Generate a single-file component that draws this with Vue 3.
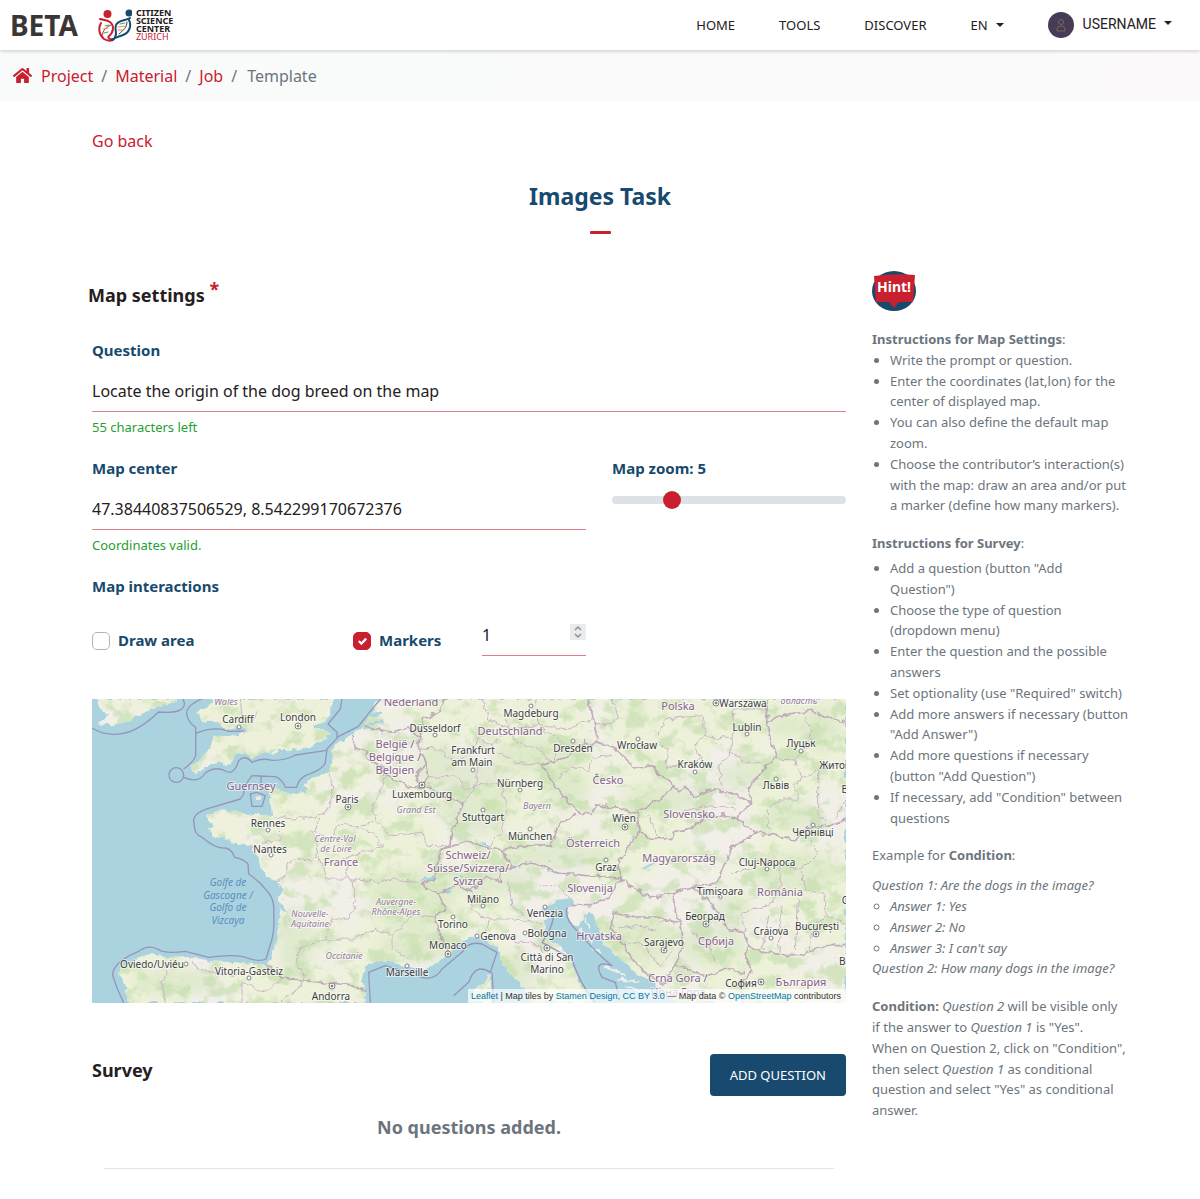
<script setup>
import { ref, computed } from 'vue'

const question = ref('Locate the origin of the dog breed on the map')
const center = ref('47.38440837506529, 8.542299170672376')
const zoom = ref(5)
const drawArea = ref(false)
const markers = ref(true)
const markerCount = ref(1)
const charactersLeft = computed(() => 100 - question.value.length)

const links = ['HOME', 'TOOLS', 'DISCOVER']
const crumbs = ['Project', 'Material', 'Job']

const mapHints = [
  'Write the prompt or question.',
  'Enter the coordinates (lat,lon) for the center of displayed map.',
  'You can also define the default map zoom.',
  'Choose the contributor’s interaction(s) with the map: draw an area and/or put a marker (define how many markers).'
]
const surveyHints = [
  'Add a question (button "Add Question")',
  'Choose the type of question (dropdown menu)',
  'Enter the question and the possible answers',
  'Set optionality (use "Required" switch)',
  'Add more answers if necessary (button "Add Answer")',
  'Add more questions if necessary (button "Add Question")',
  'If necessary, add "Condition" between questions'
]
const answers = ['Answer 1: Yes', 'Answer 2: No', "Answer 3: I can't say"]

// Land masses, drawn on a grid three times finer than the map.
const land = [
  'M864 0L840 40L819 77L790 100L759 120L725 137L722 182L715 217L660 237L635 262L650 277L600 287L565 277L550 265L520 267L535 297L540 342L525 350L500 342L480 352L450 342L430 332L390 334L350 350L346 372L375 378L350 392L370 417L410 422L440 437L480 437L490 460L500 477L507 507L530 535L555 547L572 577L557 607L575 620L592 655L566 622L560 665L556 700L550 737L540 777L520 797L480 795L420 790L350 787L290 775L230 777L180 765L150 772L110 797L80 817L95 847L105 887L110 912L814 912L819 877L809 837L819 807L859 782L899 787L939 802L994 812L1029 797L1064 767L1099 737L1129 715L1159 709L1189 732L1219 747L1234 787L1249 817L1279 847L1299 877L1319 912L1499 912L1474 867L1449 817L1439 777L1399 737L1364 717L1359 677L1369 647L1349 632L1399 602L1439 597L1449 612L1429 627L1424 647L1439 677L1460 682L1475 655L1490 632L1515 672L1539 737L1593 787L1633 822L1693 857L1733 887L1753 912L2262 912L2262 0Z',
  'M355 -3L365 9L345 27L315 39L330 57L335 67L375 69L400 92L440 82L470 87L455 97L440 109L400 112L365 109L355 147L320 187L290 207L320 222L350 202L390 187L405 202L420 187L425 167L465 162L480 177L520 157L550 152L610 152L660 142L700 122L715 97L690 92L660 82L700 67L715 42L710 27L722 7L722 -3Z',
  'M15 -3L20 22L45 47L20 72L60 82L90 72L130 57L180 27L250 9L255 -3Z',
  'M1135 912L1149 867L1185 847L1192 822L1198 870L1196 912Z',
  'M490 294L508 292L505 300L494 300Z',
  'M540 162L552 154L560 162L548 168Z'
].join('')

const seaLines = [
  'M0 87Q40 112 90 104T200 39Q280 45 277 12L272 -3',
  'M335 -3Q280 20 284 45Q288 70 311 85V170Q305 190 275 210',
  'M275 235Q320 255 340 222Q370 200 400 216Q425 232 440 185Q460 165 480 190Q510 175 540 184Q580 185 610 168L700 155L740 112L799 82L839 32L868 -3',
  'M311 103Q370 80 410 97L455 96',
  'M750 0L745 30L708 75L735 100V118',
  'M705 152L700 190Q695 210 640 230Q620 240 614 265H580Q570 240 550 233L480 230Q455 260 455 285L445 300L350 328Q295 345 307 375Q305 405 330 415Q370 450 400 447Q420 450 428 475Q455 480 468 495L470 525Q500 545 520 570Q550 600 545 640Q548 690 540 720L522 780Q500 790 460 775Q430 765 350 775L280 757Q220 765 200 752Q170 735 140 757Q60 790 62 830Q75 870 95 912',
  'M507 230V275M475 285L480 322H510L520 290L495 280Z',
  'M835 912L830 820L880 800Q930 815 990 835Q1030 845 1050 810L1110 760Q1130 725 1170 735L1215 760L1195 820Q1150 790 1130 850L1085 890',
  'M1200 820L1205 912',
  'M1385 650Q1380 690 1350 730L1440 780Q1460 850 1510 912',
  'M1425 625Q1415 660 1460 700Q1510 760 1560 800Q1500 780 1530 835L1570 850L1580 890'
].join('')

const borders = [
  'M819 82L889 102L949 87L984 117L979 147L999 187L974 232L984 262L1009 237L999 187',
  'M779 107L789 147L824 157L829 182L869 202L884 232L959 267L1009 262L1079 302L1114 315L1079 397L1074 437L1044 452',
  'M1059 -3L1044 37L994 57L984 117',
  'M1489 -3L1504 57L1514 117L1499 147L1479 127L1419 177L1349 197L1379 247L1409 287L1459 337L1499 349L1509 317L1569 327L1629 342L1659 327L1709 297L1744 262',
  'M1509 127L1569 147L1599 177L1629 207L1679 197L1699 222L1744 257L1759 277L1779 262L1809 292L1859 272L1919 282L1979 312L1969 267L2009 217L2054 177L2029 97L2024 -3',
  'M1639 342L1644 397L1674 417L1739 422L1749 397L1799 387L1839 357L1899 347L1939 362L1944 342L1979 312',
  'M1939 362L1989 402L2049 407L2109 427L2139 387L2199 382L2262 362',
  'M1989 402L1939 437L1918 447L1883 537L1873 552L1803 562L1743 582L1678 597L1623 567L1588 537L1578 497L1603 447L1644 397',
  'M1044 452L1129 427L1189 447L1229 452L1329 437L1379 442L1399 377L1449 347',
  'M1044 452L1029 537L989 557L1040 585L1099 557L1139 577L1179 537L1229 547L1219 507L1259 507L1229 452',
  'M1040 585L1059 627L1029 657L1049 717L1069 757',
  'M1259 507L1319 492L1399 522L1509 532L1588 537M1439 617L1499 617L1549 597L1588 537',
  'M1563 642L1558 687L1613 767L1663 827L1718 857L1748 797L1773 747L1763 672L1713 657L1633 657ZM1743 582L1748 637L1763 672',
  'M1803 562L1853 607L1893 657L1903 687L1953 697L1968 737L1983 752L2063 767L2133 767L2203 737L2262 737',
  'M1968 737L1958 777L1983 812L1943 857L1953 912M1748 797L1803 817L1843 832L1903 807L1953 822',
  'M2029 72L2069 47L2159 37L2262 72',
  'M520 797L570 837L660 847L700 852L780 857L819 877'
].join('')

const regions = [
  'M540 350L600 360L660 355L700 340L722 300L715 217M680 360L670 400L720 420L740 375L790 382',
  'M560 380L565 420L510 432M590 490L580 530L550 547M590 490L630 475L660 485L680 460L665 400',
  'M680 470L700 540L780 540L790 610L770 660L720 660L700 720L620 750L615 800L640 830M700 720L780 720L850 690L900 710L960 650L1029 657',
  'M790 382L850 370L839 320L870 270L880 232M790 382L840 400L870 440L760 480L770 540M850 370L900 410L990 400L1000 440L1060 440',
  'M770 540L860 550L900 540L980 550M900 710L900 750L950 780M979 147L1040 150L1090 190L1130 170L1160 120L1200 140L1260 90L1190 60L1170 0',
  'M1009 237L1090 230L1120 270L1190 250L1230 260L1245 330L1230 400L1189 447M1114 315L1150 270L1160 190M1220 160L1270 190L1349 197',
  'M1240 60L1270 130L1340 150L1380 190L1410 130L1340 80L1330 0M1260 90L1340 80L1430 90L1500 60',
  'M1399 240L1440 200L1490 215L1500 175L1560 170M1560 -3L1580 60L1540 80L1509 80M1700 110L1720 60L1830 50L1840 110L1920 120L1925 30L2020 30',
  'M1690 130L1730 150L1720 210L1830 180L1800 140L1840 110M1920 120L1915 170L1880 200L1890 270M1915 160L1960 190L2010 195',
  'M1770 340L1850 320L1930 330M1670 350L1700 420M2054 177L2110 180L2160 130L2140 50M2110 180L2130 240L2100 260L2120 300L2070 300L2025 330L2030 390',
  'M2180 210L2180 350L2200 370M2130 240L2180 210L2262 190M2262 300L2230 360',
  'M1918 520L1980 510L2000 480L2060 500L2070 560L2030 620L1950 640L1960 700M2060 500L2130 510L2180 460L2150 420M2130 510L2140 570L2200 590L2200 650L2262 670M2070 620L2060 770M2030 650L2010 750M2120 600L2110 750M2200 650L2160 690L2150 760',
  'M1140 577L1140 630L1190 660L1270 660L1359 677M1190 660L1180 700M1250 547L1260 620L1300 650M1340 560L1400 560L1430 597M1360 760L1340 740L1250 720',
  'M1580 687L1630 680L1690 690L1720 657M1600 730L1660 740L1700 800L1740 760M1800 700L1850 730L1870 790',
  'M215 790L230 820L210 850L220 912M300 790L320 810L430 830L450 800M450 912L450 850L520 880L570 837M560 912L620 870L640 830',
  'M445 0L450 50L480 70L500 30'
].join('')

const lakes = [
  [1010, 540, 40, 8, -15], [1183, 437, 28, 6, 30], [1670, 500, 50, 5, -28], [1258, 610, 5, 28, 8],
  [1105, 530, 14, 6, 40], [1070, 577, 26, 5, -20], [1620, 415, 5, 14, 30], [1265, 502, 12, 5, 0], [1370, 484, 14, 5, 0]
]

const woods = [
  [2185, 90, 55, 70], [2080, 80, 50, 30], [1960, 230, 90, 40], [1720, 300, 130, 40], [2100, 350, 90, 40],
  [2110, 520, 130, 60], [1920, 640, 50, 60], [610, 730, 50, 110], [960, 600, 130, 90], [1180, 545, 150, 40],
  [1400, 470, 170, 40], [1150, 300, 110, 110], [1340, 170, 140, 50], [1640, 720, 120, 70], [1430, 270, 60, 60],
  [1060, 200, 90, 60], [1270, 820, 60, 60], [1860, 740, 100, 60], [250, 850, 120, 40], [980, 740, 120, 50]
]

// Label: text, centre x, baseline y, kind
const labels = [
  ['Wales', 134, 6, 'region'], ['Cardiff', 146, 24, 'city'], ['London', 206, 22, 'city'],
  ['Guernsey', 159, 91, 'state'], ['Rennes', 176, 128, 'city'], ['Nantes', 178, 154, 'city'], ['Paris', 255, 104, 'city'],
  ['Centre-Val', 243, 143, 'region'], ['de Loire', 244, 153, 'region'], ['France', 249, 167, 'country'],
  ['Golfe de', 136, 187, 'sea'], ['Gascogne /', 136, 200, 'sea'], ['Golfo de', 136, 212, 'sea'], ['Vizcaya', 136, 225, 'sea'],
  ['Nouvelle-', 218, 218, 'region'], ['Aquitaine', 218, 228, 'region'], ['Occitanie', 252, 260, 'region'],
  ['Oviedo/Uviéu', 60, 269, 'city'], ['Vitoria-Gasteiz', 157, 276, 'city'], ['Andorra', 239, 301, 'city'],
  ['Nederland', 319, 7, 'country'], ['Düsseldorf', 343, 33, 'city'], ['België /', 303, 49, 'country'],
  ['Belgique /', 303, 62, 'country'], ['Belgien', 303, 75, 'country'], ['Luxembourg', 330, 99, 'city'],
  ['Grand Est', 324, 114, 'region'], ['Magdeburg', 439, 18, 'city'], ['Deutschland', 418, 36, 'country'],
  ['Frankfurt', 381, 55, 'city'], ['am Main', 380, 67, 'city'], ['Dresden', 481, 53, 'city'], ['Nürnberg', 428, 88, 'city'],
  ['Bayern', 445, 110, 'region'], ['Stuttgart', 391, 122, 'city'], ['München', 438, 141, 'city'],
  ['Schweiz/', 376, 160, 'country'], ['Suisse/Svizzera/', 376, 173, 'country'], ['Svizra', 376, 186, 'country'],
  ['Auvergne-', 304, 206, 'region'], ['Rhône-Alpes', 304, 216, 'region'], ['Milano', 391, 204, 'city'],
  ['Torino', 361, 229, 'city'], ['Genova', 406, 241, 'city'], ['Monaco', 356, 250, 'city'], ['Marseille', 315, 277, 'city'],
  ['Venezia', 453, 218, 'city'], ['Bologna', 455, 238, 'city'], ['Città di San', 455, 262, 'city'], ['Marino', 455, 274, 'city'],
  ['Polska', 586, 11, 'country'], ['Warszawa', 651, 8, 'city'], ['область', 707, 5, 'region'], ['Lublin', 655, 32, 'city'],
  ['Wrocław', 545, 50, 'city'], ['Луцьк', 709, 48, 'city'], ['Kraków', 603, 69, 'city'], ['Житомир', 750, 70, 'city'],
  ['Česko', 516, 85, 'country'], ['Львів', 684, 90, 'city'], ['Slovensko', 597, 119, 'country'], ['Wien', 532, 123, 'city'],
  ['Österreich', 501, 148, 'country'], ['Чернівці', 721, 137, 'city'], ['Magyarország', 587, 163, 'country'],
  ['Graz', 514, 172, 'city'], ['Cluj-Napoca', 675, 167, 'city'], ['Slovenija', 498, 193, 'country'],
  ['Timișoara', 628, 196, 'city'], ['România', 688, 197, 'country'], ['Београд', 613, 221, 'city'],
  ['Hrvatska', 507, 241, 'country'], ['Craiova', 679, 236, 'city'], ['București', 725, 231, 'city'],
  ['Sarajevo', 572, 247, 'city'], ['Србија', 624, 246, 'country'], ['Crna Gora /', 586, 283, 'country'],
  ['Црна Гора', 586, 297, 'country'], ['София', 649, 288, 'city'], ['България', 709, 287, 'country'],
  ['Варна', 762, 266, 'city'], ['Chișinău', 770, 205, 'city'], ['Bălți', 760, 94, 'city']
]
const capitals = [[206, 27], [256, 108], [330, 86], [533, 128], [624, 4], [614, 225], [572, 251], [724, 235], [356, 255], [455, 249], [240, 287], [669, 283]]
const towns = [[147, 28], [176, 131], [179, 156], [94, 265], [157, 279], [343, 36], [439, 7], [381, 71], [481, 42], [428, 91], [391, 111], [438, 130], [391, 207], [361, 218], [385, 237], [315, 267], [453, 208], [433, 234], [655, 35], [546, 40], [709, 52], [603, 73], [684, 80], [721, 126], [514, 161], [675, 170], [628, 198], [679, 239]]
</script>

<template>
  <div class="page">
    <header class="topbar">
      <a class="brand" href="#">
        <span class="beta">BETA</span>
        <svg class="logo" viewBox="0 0 34 34" width="34" height="34" aria-hidden="true">
          <circle cx="9.500" cy="6" r="4" fill="#c8202f" />
          <circle cx="31" cy="5" r="3.500" fill="#174a6e" />
          <g fill="none" stroke-linecap="round">
            <path d="M2 11C5 12 9 12 12 14C17 18 15 25 11 28C9 30 12 32 16 31" stroke="#c8202f" stroke-width="2" />
            <path d="M3 15C0 20 1 27 6 31C9 33 12 33 15 32" stroke="#c8202f" stroke-width="2" />
            <path d="M4 28C5 22 8 19 13 17" stroke="#c8202f" stroke-width="1" />
            <path d="M32 10C27 13 20 12 18 17C16 22 20 25 17 29" stroke="#174a6e" stroke-width="2" />
            <path d="M31 12C34 18 31 25 25 27C20 29 17 29 14 32" stroke="#174a6e" stroke-width="2" />
            <path d="M29 14C29 20 25 22 21 26" stroke="#174a6e" stroke-width="1" />
            <path d="M7 18L11 17M6 25L10 24M22 16L27 15" stroke="#4aa564" stroke-width="1" />
            <path d="M5 21L10 20M20 22L26 22M20 19L28 18" stroke="#e58a5a" stroke-width="1" />
          </g>
        </svg>
        <span class="wordmark">
          <span>CITIZEN</span><span>SCIENCE</span><span>CENTER</span><span class="zurich">ZURICH</span>
        </span>
      </a>
      <nav class="menu">
        <a v-for="link in links" :key="link" href="#">{{ link }}</a>
        <button type="button" class="drop">EN<span class="caret"></span></button>
        <button type="button" class="drop user">
          <svg class="avatar" viewBox="0 0 26 26" width="26" height="26" aria-hidden="true">
            <circle cx="13" cy="13" r="13" fill="#463c57" />
            <g fill="none" stroke="#6f6868">
              <circle cx="13" cy="10" r="2.500" />
              <path d="M9 19V17Q9 14 13 14T17 17V19Z" fill="#50393f" />
            </g>
          </svg>
          <span class="username">USERNAME<span class="caret"></span></span>
        </button>
      </nav>
    </header>

    <nav class="crumbs" aria-label="Breadcrumb">
      <a href="#" aria-label="Home">
        <svg class="house" viewBox="0 0 576 512" width="19" height="17" aria-hidden="true">
          <path fill="#c8202f" d="M280 148L96 300V464a16 16 0 0 0 16 16l112 0a16 16 0 0 0 16-16V368a16 16 0 0 1 16-16h64a16 16 0 0 1 16 16v96a16 16 0 0 0 16 16h112a16 16 0 0 0 16-16V300L296 148a12 12 0 0 0-16 0zM572 251L488 182V44a12 12 0 0 0-12-12h-56a12 12 0 0 0-12 12v72L318 43a48 48 0 0 0-61 0L4 251a12 12 0 0 0-2 17l26 31a12 12 0 0 0 17 2L280 107a12 12 0 0 1 16 0l235 194a12 12 0 0 0 17-2l26-31a12 12 0 0 0-2-17z" />
        </svg>
      </a>
      <ol>
        <li v-for="crumb in crumbs" :key="crumb"><a href="#">{{ crumb }}</a></li>
        <li aria-current="page">Template</li>
      </ol>
    </nav>

    <main class="container">
      <a class="back" href="#">Go back</a>
      <h1>Images Task</h1>

      <div class="columns">
        <section class="form">
          <h2 class="settings">Map settings <span class="required">*</span></h2>

          <div class="field">
            <label for="question">Question</label>
            <input id="question" v-model="question" type="text" />
            <p class="valid">{{ charactersLeft }} characters left</p>
          </div>

          <div class="split">
            <div class="field">
              <label for="center">Map center</label>
              <input id="center" v-model="center" type="text" />
              <p class="valid">Coordinates valid.</p>
            </div>
            <div class="field">
              <label for="zoom">Map zoom: {{ zoom }}</label>
              <input id="zoom" v-model="zoom" type="range" min="1" max="18" />
            </div>
          </div>

          <fieldset class="interactions">
            <legend>Map interactions</legend>
            <div class="options">
              <label class="check"><input v-model="drawArea" type="checkbox" />Draw area</label>
              <label class="check"><input v-model="markers" type="checkbox" />Markers</label>
              <input v-model="markerCount" type="number" min="1" aria-label="Number of markers" />
            </div>
          </fieldset>

          <div class="map">
            <svg viewBox="0 0 754 304" preserveAspectRatio="xMidYMid slice" role="img" aria-label="Map of Europe">
              <defs>
                <clipPath id="land"><path :d="land" transform="scale(.33333)" /></clipPath>
                <filter id="rough" x="0" y="0" width="1" height="1" color-interpolation-filters="sRGB">
                  <feTurbulence type="fractalNoise" baseFrequency=".14" numOctaves="2" seed="4" />
                  <feDisplacementMap in="SourceGraphic" scale="7" xChannelSelector="R" yChannelSelector="G" />
                </filter>
                <filter id="speckle" x="0" y="0" width="1" height="1" color-interpolation-filters="sRGB">
                  <feTurbulence type="fractalNoise" baseFrequency=".045 .06" numOctaves="5" seed="12" />
                  <feColorMatrix values="0 0 0 0 .77  0 0 0 0 .87  0 0 0 0 .68  0 6 0 0 -3" />
                </filter>
                <filter id="fields" x="0" y="0" width="1" height="1" color-interpolation-filters="sRGB">
                  <feTurbulence type="fractalNoise" baseFrequency=".012" numOctaves="3" seed="7" />
                  <feColorMatrix values="0 0 0 0 .93  0 0 0 0 .945  0 0 0 0 .85  0 5 0 0 -1.800" />
                </filter>
                <filter id="soft"><feGaussianBlur stdDeviation="14" /></filter>
              </defs>
              <rect width="754" height="304" fill="#aad3df" />
              <g filter="url(#rough)">
                <g clip-path="url(#land)">
                  <rect width="754" height="304" fill="#f2efe9" />
                  <rect width="754" height="304" filter="url(#fields)" />
                  <g transform="scale(.33333)" filter="url(#soft)" fill="#cfe3b9" opacity=".45">
                    <ellipse v-for="(w, i) in woods" :key="i" :cx="w[0]" :cy="w[1]" :rx="w[2]" :ry="w[3]" />
                  </g>
                  <rect width="754" height="304" filter="url(#speckle)" opacity=".65" />
                </g>
                <g transform="scale(.33333)" fill="none" stroke-linejoin="round">
                  <path d="M835 50L870 40M830 75L875 65M815 90L870 93" stroke="#aad3df" stroke-width="7" />
                  <path d="M1480 660L1492 690M1465 690L1500 730M1500 745L1530 765M1530 800L1600 830M1580 840L1640 850M1600 865L1680 880" stroke="#f2efe9" stroke-width="6" />
                  <ellipse v-for="(l, i) in lakes" :key="i" :cx="l[0]" :cy="l[1]" :rx="l[2] / 2" :ry="l[3] / 2" :transform="`rotate(${l[4]} ${l[0]} ${l[1]})`" fill="#9fd0e6" />
                  <path :d="regions" stroke="#c9b5c6" stroke-width="3" />
                  <path :d="borders" stroke="#b79fb5" stroke-width="5" opacity=".85" />
                </g>
              </g>
              <g transform="scale(.33333)" fill="none" stroke="#9695b8" stroke-width="4" stroke-linejoin="round">
                <path :d="seaLines" />
                <circle cx="253" cy="228" r="22" />
              </g>
              <g class="dots">
                <circle v-for="(t, i) in towns" :key="i" :cx="t[0]" :cy="t[1]" r="2" />
                <g v-for="(c, i) in capitals" :key="'c' + i">
                  <circle :cx="c[0]" :cy="c[1]" r="3" /><circle class="core" :cx="c[0]" :cy="c[1]" r="1" />
                </g>
              </g>
              <text v-for="l in labels" :key="l[0]" :x="l[1]" :y="l[2]" :class="l[3]">{{ l[0] }}</text>
            </svg>
            <p class="attribution">
              <a href="#">Leaflet</a> | Map tiles by <a href="#">Stamen Design, CC BY 3.0</a> — Map data © <a href="#">OpenStreetMap</a> contributors
            </p>
          </div>

          <div class="survey">
            <h2>Survey</h2>
            <button type="button" class="add">ADD QUESTION</button>
          </div>
          <p class="empty">No questions added.</p>
          <hr />
        </section>

        <aside class="hints">
          <svg class="hint" viewBox="0 0 44 42" width="44" height="42" role="img" aria-label="Hint!">
            <ellipse cx="22" cy="21" rx="22" ry="20" fill="#174a6e" />
            <path d="M2 6Q22 3 43 5L41 32H27L22 38L17 32H4Z" fill="#c8202f" />
            <text x="22" y="22">Hint!</text>
          </svg>
          <p><strong>Instructions for Map Settings</strong>:</p>
          <ul>
            <li v-for="hint in mapHints" :key="hint">{{ hint }}</li>
          </ul>
          <p class="section"><strong>Instructions for Survey</strong>:</p>
          <ul class="spaced">
            <li v-for="hint in surveyHints" :key="hint">{{ hint }}</li>
          </ul>
          <p class="section">Example for <strong>Condition</strong>:</p>
          <div class="example">
            <p>Question 1: Are the dogs in the image?</p>
            <ul>
              <li v-for="answer in answers" :key="answer">{{ answer }}</li>
            </ul>
            <p>Question 2: How many dogs in the image?</p>
          </div>
          <p class="section"><strong>Condition:</strong> <em>Question 2</em> will be visible only<br />if the answer to <em>Question 1</em> is "Yes".</p>
          <p>When on Question 2, click on "Condition", then select <em>Question 1</em> as conditional question and select "Yes" as conditional answer.</p>
        </aside>
      </div>
    </main>
  </div>
</template>

<style>
body {
  margin: 0;
  background: #fff;
}
</style>

<style scoped>
.page {
  color: #242021;
  font: 16px/24px "Noto Sans", "Open Sans", sans-serif;
}
.page * {
  box-sizing: border-box;
}
a {
  color: #c8202f;
  text-decoration: none;
}
p,
h1,
h2,
ul,
ol {
  margin: 0;
  padding: 0;
}
button,
input {
  font: inherit;
  color: inherit;
}

.topbar {
  position: relative;
  display: flex;
  align-items: center;
  justify-content: space-between;
  height: 50px;
  padding: 0 28px 0 10px;
  background: #fff;
  box-shadow: 0 1px 4px rgba(0, 0, 0, 0.2);
}
.brand {
  display: flex;
  align-items: center;
  color: #3b3536;
}
.beta {
  margin-right: 20px;
  font-size: 28px;
  font-weight: 700;
}
.wordmark {
  display: flex;
  flex-direction: column;
  margin-left: 4px;
  color: #242021;
  font-size: 9px;
  font-weight: 700;
  line-height: 8px;
}
.zurich {
  color: #c8202f;
  font-weight: 400;
}
.menu {
  display: flex;
  align-items: center;
  gap: 44px;
  font-size: 13px;
}
.menu a {
  color: #242021;
}
.drop {
  display: flex;
  align-items: center;
  padding: 0;
  border: 0;
  background: none;
}
.caret {
  display: inline-block;
  margin-left: 8px;
  border: 4px solid transparent;
  border-top-color: currentColor;
  border-bottom: 0;
  vertical-align: 4px;
}
.user {
  gap: 9px;
}
.username {
  padding-bottom: 2px;
  font: 14px/22px Roboto, sans-serif;
}

.crumbs {
  display: flex;
  align-items: center;
  gap: 9px;
  height: 51px;
  padding-left: 13px;
  background: linear-gradient(100deg, #f9fbfb, #fafafa 60%, #fcfafa);
  color: #6c757d;
}
.house {
  display: block;
}
.crumbs ol {
  display: flex;
  list-style: none;
}
.crumbs li + li::before {
  content: "/";
  padding: 0 8px;
}
.crumbs li:last-child::before {
  padding-right: 10px;
}

.container {
  max-width: 1200px;
  margin: 0 auto;
  padding: 28px 80px 30px;
}
.back {
  display: block;
  margin-left: 12px;
}
h1 {
  margin-top: 23px;
  color: #174a6e;
  font-size: 23px;
  line-height: 40px;
  text-align: center;
}
h1::after {
  content: "";
  display: block;
  width: 21px;
  height: 3px;
  margin: 15px auto 36px;
  border-radius: 1px;
  background: #c8202f;
}
h2 {
  font-size: 18px;
  line-height: 32px;
}
.columns {
  display: grid;
  grid-template-columns: minmax(0, 1fr) 257px;
  gap: 26px;
  margin-right: -9px;
  padding-left: 12px;
}
.settings {
  margin: 0 0 18px -4px;
  line-height: 50px;
}
.required {
  color: #c8202f;
  vertical-align: 6px;
  line-height: 20px;
}
.field {
  display: flex;
  flex-direction: column;
  margin-bottom: 19px;
}
label,
legend {
  padding: 0;
  color: #174a6e;
  font-size: 15px;
  font-weight: 700;
}
input[type="text"],
input[type="number"] {
  height: 42px;
  padding: 0;
  border: 0;
  border-bottom: 1px solid #dc8088;
  background: none;
}
input[type="text"] {
  width: 100%;
  margin: 8px 0 5px;
}
.valid {
  color: #1fa032;
  font-size: 13px;
  line-height: 20px;
}
.split {
  display: grid;
  grid-template-columns: minmax(0, 494fr) minmax(0, 234fr);
  gap: 26px;
}
input[type="range"] {
  appearance: none;
  width: 100%;
  height: 18px;
  margin: 11px 0 0;
  background: none;
}
input[type="range"]::-webkit-slider-runnable-track {
  height: 8px;
  border-radius: 8px;
  background: #dee2e6;
}
input[type="range"]::-webkit-slider-thumb {
  appearance: none;
  width: 18px;
  height: 18px;
  margin-top: -5px;
  border-radius: 50%;
  background: #c8202f;
}
.interactions {
  margin: 0 0 43px;
  padding: 0;
  border: 0;
}
.options {
  display: grid;
  grid-template-columns: 261fr 129fr 104fr 260fr;
  align-items: start;
  margin-top: 16px;
}
.check {
  display: flex;
  align-items: center;
  gap: 8px;
  padding-top: 14px;
}
input[type="checkbox"] {
  appearance: none;
  width: 18px;
  height: 18px;
  margin: 2px 0 0;
  border: 1px solid #adb5bd;
  border-radius: 5px;
  background: #fff center / 9px no-repeat;
}
input[type="checkbox"]:checked {
  border-color: #c8202f;
  background-color: #c8202f;
  background-image: url("data:image/svg+xml,%3Csvg xmlns='http://www.w3.org/2000/svg' viewBox='0 0 8 8'%3E%3Cpath fill='%23fff' d='M6.564.75l-3.590 3.612-1.538-1.550L0 4.260l2.974 2.990L8 2.193z'/%3E%3C/svg%3E");
}
input[type="number"] {
  width: 100%;
}
input[type="number"]::-webkit-inner-spin-button {
  appearance: none;
  width: 16px;
  height: 16px;
  opacity: 1;
  background: #e9ebec url("data:image/svg+xml,%3Csvg xmlns='http://www.w3.org/2000/svg' viewBox='0 0 16 16'%3E%3Cpath fill='none' stroke='%23909396' stroke-width='1.500' d='M5 6l3-3 3 3M5 10l3 3 3-3'/%3E%3C/svg%3E");
}

.map {
  position: relative;
  height: 304px;
  overflow: hidden;
}
.map svg {
  display: block;
  width: 100%;
  height: 100%;
}
.map text {
  font-size: 10px;
  text-anchor: middle;
  paint-order: stroke;
  stroke: rgba(255, 255, 255, 0.6);
  stroke-width: 2px;
  fill: #3d3d3f;
}
.map .country,
.map .state {
  font-size: 11px;
  fill: #85618a;
}
.map .region {
  font-size: 9px;
  font-style: italic;
  fill: #967a9c;
}
.map .sea {
  font-style: italic;
  fill: #5c8fc2;
  stroke: none;
}
.dots {
  fill: #fff;
  stroke: #808084;
}
.core {
  fill: #67676b;
}
.attribution {
  position: absolute;
  right: 0;
  bottom: 0;
  padding: 0 5px 0 3px;
  background: rgba(255, 255, 255, 0.7);
  color: #333;
  font: 9px/14px "Liberation Sans", Arial, sans-serif;
}
.attribution a {
  color: #0078a8;
}

.survey {
  display: flex;
  justify-content: space-between;
  align-items: flex-start;
  margin-top: 51px;
}
.add {
  height: 42px;
  padding: 0 20px;
  border: 0;
  border-radius: 4px;
  background: #174a6e;
  color: #fff;
  font-size: 13px;
}
.empty {
  margin-top: 15px;
  color: #6c757d;
  font-size: 18px;
  font-weight: 700;
  line-height: 32px;
  text-align: center;
}
hr {
  margin: 25px 12px 0;
  border: 0;
  border-top: 1px solid #e5e5e5;
}

.hints {
  color: #6c757d;
  font-size: 13px;
  line-height: 1.6;
}
.hint {
  display: block;
  margin-bottom: 17px;
}
.hint text {
  fill: #fff;
  font-size: 14px;
  font-weight: 700;
  text-anchor: middle;
}
.hints ul {
  padding-left: 18px;
}
.section {
  margin-top: 17px;
}
.hints .spaced {
  margin-top: 4px;
}
.example {
  margin-top: 9px;
  font-style: italic;
}
.example ul {
  list-style: circle;
}
</style>
